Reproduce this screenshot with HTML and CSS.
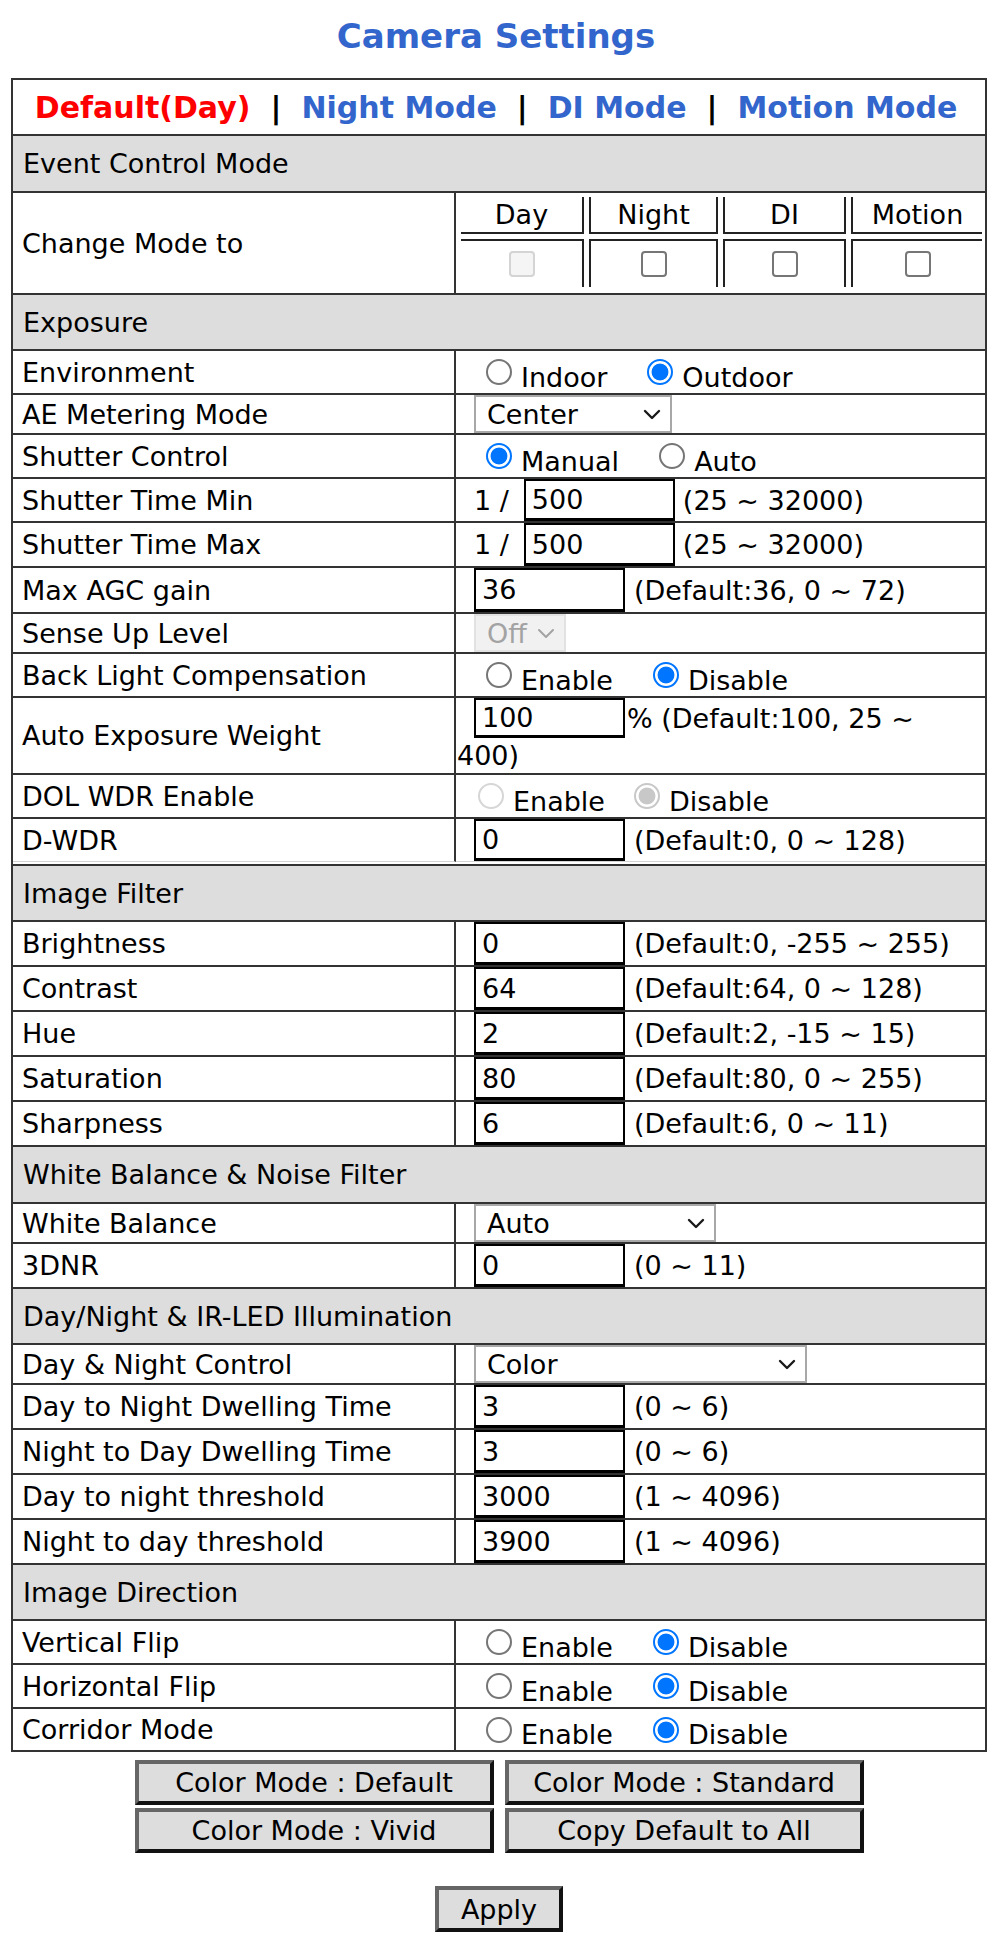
FILE: index.html
```html
<!DOCTYPE html>
<html>
<head>
<meta charset="utf-8">
<title>Camera Settings</title>
<link rel="stylesheet" href="styles.css">
</head>
<body>
<h1 class="title">Camera Settings</h1>
<div class="panel">
  <div class="tabs">
    <span class="tab active">Default(Day)</span><span class="sep">|</span><span class="tab">Night Mode</span><span class="sep">|</span><span class="tab">DI Mode</span><span class="sep">|</span><span class="tab">Motion Mode</span>
  </div>

  <div class="hdr h57">Event Control Mode</div>
  <div class="row h102">
    <div class="lbl">Change Mode to</div>
    <div class="val modes">
      <div class="mgrid">
        <div class="mh first">Day</div>
        <div class="mh">Night</div>
        <div class="mh">DI</div>
        <div class="mh last">Motion</div>
        <div class="mc first"><span class="chk dis"></span></div>
        <div class="mc"><span class="chk"></span></div>
        <div class="mc"><span class="chk"></span></div>
        <div class="mc last"><span class="chk"></span></div>
      </div>
    </div>
  </div>

  <div class="hdr">Exposure</div>
  <div class="row h44">
    <div class="lbl">Environment</div>
    <div class="val opts">
      <span class="opt"><span class="radio"></span><span class="otext">Indoor</span></span>
      <span class="opt"><span class="radio on"></span><span class="otext">Outdoor</span></span>
    </div>
  </div>
  <div class="row h40">
    <div class="lbl">AE Metering Mode</div>
    <div class="val"><div class="sel w198"><span>Center</span><svg class="chev" viewBox="0 0 18 11" width="18" height="11"><path d="M2 2 L9 9 L16 2"/></svg></div></div>
  </div>
  <div class="row h44">
    <div class="lbl">Shutter Control</div>
    <div class="val opts">
      <span class="opt"><span class="radio on"></span><span class="otext">Manual</span></span>
      <span class="opt"><span class="radio"></span><span class="otext">Auto</span></span>
    </div>
  </div>
  <div class="row h44">
    <div class="lbl">Shutter Time Min</div>
    <div class="val"><span class="pre">1 /</span><input class="num wide" value="500"><span class="note n8">(25 ~ 32000)</span></div>
  </div>
  <div class="row h45">
    <div class="lbl">Shutter Time Max</div>
    <div class="val"><span class="pre">1 /</span><input class="num wide" value="500"><span class="note n8">(25 ~ 32000)</span></div>
  </div>
  <div class="row h46">
    <div class="lbl">Max AGC gain</div>
    <div class="val"><input class="num" value="36"><span class="note">(Default:36, 0 ~ 72)</span></div>
  </div>
  <div class="row h40">
    <div class="lbl">Sense Up Level</div>
    <div class="val"><div class="sel w92 disabled"><span>Off</span><svg class="chev" viewBox="0 0 18 11" width="18" height="11"><path d="M2 2 L9 9 L16 2"/></svg></div></div>
  </div>
  <div class="row h44">
    <div class="lbl">Back Light Compensation</div>
    <div class="val opts">
      <span class="opt"><span class="radio"></span><span class="otext">Enable</span></span>
      <span class="opt"><span class="radio on"></span><span class="otext">Disable</span></span>
    </div>
  </div>
  <div class="row h77">
    <div class="lbl">Auto Exposure Weight</div>
    <div class="val aew">
      <div class="line1"><input class="num" value="100"><span class="pct">% (Default:100, 25 ~</span></div>
      <div class="line2">400)</div>
    </div>
  </div>
  <div class="row h44">
    <div class="lbl">DOL WDR Enable</div>
    <div class="val opts dol">
      <span class="opt"><span class="radio dis"></span><span class="otext">Enable</span></span>
      <span class="opt"><span class="radio on dis"></span><span class="otext">Disable</span></span>
    </div>
  </div>
  <div class="row h47 last-in-table">
    <div class="lbl">D-WDR</div>
    <div class="val"><input class="num" value="0"><span class="note">(Default:0, 0 ~ 128)</span></div>
  </div>

  <div class="hdr">Image Filter</div>
  <div class="row h45">
    <div class="lbl">Brightness</div>
    <div class="val"><input class="num" value="0"><span class="note">(Default:0, -255 ~ 255)</span></div>
  </div>
  <div class="row h45">
    <div class="lbl">Contrast</div>
    <div class="val"><input class="num" value="64"><span class="note">(Default:64, 0 ~ 128)</span></div>
  </div>
  <div class="row h45">
    <div class="lbl">Hue</div>
    <div class="val"><input class="num" value="2"><span class="note">(Default:2, -15 ~ 15)</span></div>
  </div>
  <div class="row h45">
    <div class="lbl">Saturation</div>
    <div class="val"><input class="num" value="80"><span class="note">(Default:80, 0 ~ 255)</span></div>
  </div>
  <div class="row h45">
    <div class="lbl">Sharpness</div>
    <div class="val"><input class="num" value="6"><span class="note">(Default:6, 0 ~ 11)</span></div>
  </div>

  <div class="hdr h57">White Balance &amp; Noise Filter</div>
  <div class="row h40">
    <div class="lbl">White Balance</div>
    <div class="val"><div class="sel w242"><span>Auto</span><svg class="chev" viewBox="0 0 18 11" width="18" height="11"><path d="M2 2 L9 9 L16 2"/></svg></div></div>
  </div>
  <div class="row h45">
    <div class="lbl">3DNR</div>
    <div class="val"><input class="num" value="0"><span class="note">(0 ~ 11)</span></div>
  </div>

  <div class="hdr">Day/Night &amp; IR-LED Illumination</div>
  <div class="row h40">
    <div class="lbl">Day &amp; Night Control</div>
    <div class="val"><div class="sel w333"><span>Color</span><svg class="chev" viewBox="0 0 18 11" width="18" height="11"><path d="M2 2 L9 9 L16 2"/></svg></div></div>
  </div>
  <div class="row h45">
    <div class="lbl">Day to Night Dwelling Time</div>
    <div class="val"><input class="num" value="3"><span class="note">(0 ~ 6)</span></div>
  </div>
  <div class="row h45">
    <div class="lbl">Night to Day Dwelling Time</div>
    <div class="val"><input class="num" value="3"><span class="note">(0 ~ 6)</span></div>
  </div>
  <div class="row h45">
    <div class="lbl">Day to night threshold</div>
    <div class="val"><input class="num" value="3000"><span class="note">(1 ~ 4096)</span></div>
  </div>
  <div class="row h45">
    <div class="lbl">Night to day threshold</div>
    <div class="val"><input class="num" value="3900"><span class="note">(1 ~ 4096)</span></div>
  </div>

  <div class="hdr">Image Direction</div>
  <div class="row h44">
    <div class="lbl">Vertical Flip</div>
    <div class="val opts">
      <span class="opt"><span class="radio"></span><span class="otext">Enable</span></span>
      <span class="opt"><span class="radio on"></span><span class="otext">Disable</span></span>
    </div>
  </div>
  <div class="row h44">
    <div class="lbl">Horizontal Flip</div>
    <div class="val opts">
      <span class="opt"><span class="radio"></span><span class="otext">Enable</span></span>
      <span class="opt"><span class="radio on"></span><span class="otext">Disable</span></span>
    </div>
  </div>
  <div class="row h43">
    <div class="lbl">Corridor Mode</div>
    <div class="val opts">
      <span class="opt"><span class="radio"></span><span class="otext">Enable</span></span>
      <span class="opt"><span class="radio on"></span><span class="otext">Disable</span></span>
    </div>
  </div>
</div>

<div class="btns">
  <button class="btn">Color Mode : Default</button>
  <button class="btn">Color Mode : Standard</button>
  <button class="btn">Color Mode : Vivid</button>
  <button class="btn">Copy Default to All</button>
</div>
<div class="apply-wrap">
  <button class="btn apply">Apply</button>
</div>
</body>
</html>
```

FILE: styles.css
```css
* { box-sizing: border-box; }

body {
  margin: 0;
  font-family: "DejaVu Sans", Verdana, sans-serif;
  font-size: 27px;
  line-height: 31px;
  color: #000;
  background: #fff;
}

.title {
  margin: 0;
  height: 78px;
  padding-top: 16px;
  text-align: center;
  font-size: 34px;
  line-height: 40px;
  font-weight: bold;
  color: #3366cc;
}

.panel {
  margin-left: 11px;
  width: 976px;
  border: 2px solid #333;
}

.tabs {
  height: 54px;
  display: flex;
  align-items: center;
  justify-content: center;
  gap: 20px;
  padding-right: 6px;
  font-size: 30px;
  font-weight: bold;
}
.tab { color: #3366cc; }
.tab.active { color: #ff0000; }
.sep { color: #000; }

.hdr {
  height: 56px;
  border-top: 2px solid #333;
  background: #dddddd;
  display: flex;
  align-items: center;
  padding-left: 10px;
}
.hdr.h57 { height: 57px; }

.row {
  display: grid;
  grid-template-columns: 443px 1fr;
  border-top: 2px solid #333;
}
.h40 { height: 40px; }
.h43 { height: 43px; }
.h44 { height: 44px; }
.h45 { height: 45px; }
.h46 { height: 46px; }
.h47 { height: 47px; }
.h77 { height: 77px; }
.h102 { height: 102px; }

.lbl {
  border-right: 2px solid #333;
  display: flex;
  align-items: center;
  padding-left: 9px;
  white-space: nowrap;
}

.val {
  display: flex;
  align-items: center;
  padding-left: 18px;
  white-space: nowrap;
  min-width: 0;
}

.last-in-table .val,
.last-in-table .lbl {
  border-bottom: 1px solid #d4d4d4;
  margin-bottom: 2px;
}

/* numeric text inputs */
.num {
  align-self: stretch;
  width: 151px;
  margin: 0;
  padding: 0 0 0 6px;
  border: 2px solid #000;
  border-bottom-width: 3px;
  background: #fff;
  font: inherit;
  color: #000;
  outline: none;
}
.pre { flex: none; }
.num.wide { margin-left: 15px; }
.note { margin-left: 9px; }
.note.n8 { margin-left: 8px; }

/* auto exposure weight wrapping */
.val.aew {
  display: block;
  padding-left: 1px;
}
.aew .line1 {
  display: flex;
  align-items: center;
  height: 40px;
  padding-left: 17px;
}
.aew .line1 .num { height: 40px; }
.aew .pct { margin-left: 2px; }
.aew .line2 { line-height: 35px; }

/* fake selects */
.sel {
  align-self: stretch;
  display: flex;
  align-items: center;
  justify-content: space-between;
  border: 2px solid #a8a8a8;
  padding: 0 9px 0 11px;
  background: #fff;
}
.w92 { width: 92px; }
.w198 { width: 198px; }
.w242 { width: 242px; }
.w333 { width: 333px; }
.chev { flex: none; }
.chev path {
  fill: none;
  stroke: #1a1a1a;
  stroke-width: 2.4;
  stroke-linecap: round;
  stroke-linejoin: round;
}
.sel.disabled {
  background: #f1f1f1;
  border-color: #e2e2e2;
  color: #a3a3a3;
}
.sel.disabled .chev path { stroke: #a3a3a3; stroke-width: 2; }

/* radio groups */
.val.opts { padding-left: 30px; }
.val.opts.dol { padding-left: 22px; }
.opt {
  display: flex;
  align-items: center;
}
.opt + .opt { margin-left: 40px; }
.dol .opt + .opt { margin-left: 29px; }
.radio {
  flex: none;
  width: 26px;
  height: 26px;
  border-radius: 50%;
  border: 2px solid #767676;
  background: #fff;
  margin-right: 9px;
}
.radio.on {
  border-color: #0075ff;
  background: radial-gradient(circle, #0075ff 0, #0075ff 8px, #fff 8.8px);
}
.radio.dis { border-color: #d6d6d6; }
.radio.on.dis {
  border-color: #c8c8c8;
  background: radial-gradient(circle, #c8c8c8 0, #c8c8c8 8px, #fff 8.8px);
}
.otext { padding-top: 10px; }

/* change mode nested grid */
.val.modes {
  padding: 4px 3px 6px 5px;
  align-items: stretch;
}
.mgrid {
  display: grid;
  grid-template-columns: 123px 129px 123px 131px;
  grid-template-rows: 37px 48px;
  column-gap: 5px;
  row-gap: 5px;
}
.mh, .mc {
  border-left: 2px solid #222;
  border-right: 2px solid #222;
  display: flex;
  align-items: center;
  justify-content: center;
}
.mh { border-bottom: 2px solid #222; }
.mc { border-top: 2px solid #222; }
.mh.first, .mc.first { border-left: none; }
.mh.last, .mc.last { border-right: none; }
.chk {
  width: 26px;
  height: 26px;
  border: 2px solid #767676;
  border-radius: 4px;
  background: #fff;
}
.chk.dis {
  border-color: #d4d4d4;
  background: #f5f5f5;
}

/* buttons */
.btns {
  margin: 8px 0 0 11px;
  width: 976px;
  display: grid;
  grid-template-columns: 359px 359px;
  justify-content: center;
  column-gap: 11px;
  row-gap: 3px;
}
.btn {
  height: 45px;
  margin: 0;
  padding: 0;
  background: #dddddd;
  border: 4px solid;
  border-color: #666 #111 #111 #666;
  font: inherit;
  color: #000;
  display: flex;
  align-items: center;
  justify-content: center;
}
.apply-wrap {
  margin: 33px 0 0 11px;
  width: 976px;
  display: flex;
  justify-content: center;
}
.btn.apply {
  width: 128px;
  height: 46px;
}
```
